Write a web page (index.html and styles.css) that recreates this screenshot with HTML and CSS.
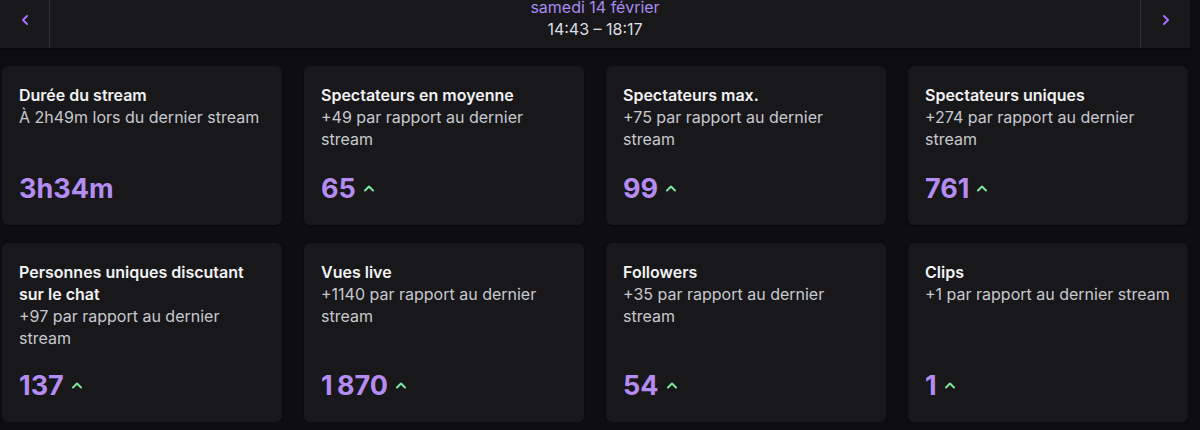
FILE: index.html
```html
<!DOCTYPE html>
<html lang="fr">
<head>
    <meta charset="UTF-8">
    <title>Statistiques du stream</title>
    <link rel="stylesheet" href="styles.css">
</head>
<body>
    <div class="page">
        <!-- Date navigation -->
        <header class="stream-nav">
            <button class="nav-btn nav-prev" aria-label="Stream précédent">
                <svg width="10" height="12" viewBox="0 0 10 12"><path d="M7 2 L3 6 L7 10" fill="none" stroke="currentColor" stroke-width="2" stroke-linecap="round" stroke-linejoin="round"/></svg>
            </button>
            <div class="stream-date">
                <div class="date">samedi 14 février</div>
                <div class="time">14:43 – 18:17</div>
            </div>
            <button class="nav-btn nav-next" aria-label="Stream suivant">
                <svg width="10" height="12" viewBox="0 0 10 12"><path d="M3 2 L7 6 L3 10" fill="none" stroke="currentColor" stroke-width="2" stroke-linecap="round" stroke-linejoin="round"/></svg>
            </button>
        </header>

        <!-- Stats -->
        <main class="stats-grid">
            <div class="stat-card">
                <div class="stat-title">Durée du stream</div>
                <div class="stat-sub">À 2h49m lors du dernier stream</div>
                <div class="stat-value">3h34m</div>
            </div>
            <div class="stat-card">
                <div class="stat-title">Spectateurs en moyenne</div>
                <div class="stat-sub">+49 par rapport au dernier stream</div>
                <div class="stat-value">65 <span class="trend-up"><svg width="12" height="8" viewBox="0 0 12 8"><path d="M2 6.5 L6 2.5 L10 6.5" fill="none" stroke="currentColor" stroke-width="2" stroke-linecap="round" stroke-linejoin="round"/></svg></span></div>
            </div>
            <div class="stat-card">
                <div class="stat-title">Spectateurs max.</div>
                <div class="stat-sub">+75 par rapport au dernier stream</div>
                <div class="stat-value">99 <span class="trend-up"><svg width="12" height="8" viewBox="0 0 12 8"><path d="M2 6.5 L6 2.5 L10 6.5" fill="none" stroke="currentColor" stroke-width="2" stroke-linecap="round" stroke-linejoin="round"/></svg></span></div>
            </div>
            <div class="stat-card">
                <div class="stat-title">Spectateurs uniques</div>
                <div class="stat-sub">+274 par rapport au dernier stream</div>
                <div class="stat-value">761 <span class="trend-up"><svg width="12" height="8" viewBox="0 0 12 8"><path d="M2 6.5 L6 2.5 L10 6.5" fill="none" stroke="currentColor" stroke-width="2" stroke-linecap="round" stroke-linejoin="round"/></svg></span></div>
            </div>
            <div class="stat-card">
                <div class="stat-title">Personnes uniques discutant sur le chat</div>
                <div class="stat-sub">+97 par rapport au dernier stream</div>
                <div class="stat-value">137 <span class="trend-up"><svg width="12" height="8" viewBox="0 0 12 8"><path d="M2 6.5 L6 2.5 L10 6.5" fill="none" stroke="currentColor" stroke-width="2" stroke-linecap="round" stroke-linejoin="round"/></svg></span></div>
            </div>
            <div class="stat-card">
                <div class="stat-title">Vues live</div>
                <div class="stat-sub">+1140 par rapport au dernier stream</div>
                <div class="stat-value">1&#8239;870 <span class="trend-up"><svg width="12" height="8" viewBox="0 0 12 8"><path d="M2 6.5 L6 2.5 L10 6.5" fill="none" stroke="currentColor" stroke-width="2" stroke-linecap="round" stroke-linejoin="round"/></svg></span></div>
            </div>
            <div class="stat-card">
                <div class="stat-title">Followers</div>
                <div class="stat-sub">+35 par rapport au dernier stream</div>
                <div class="stat-value">54 <span class="trend-up"><svg width="12" height="8" viewBox="0 0 12 8"><path d="M2 6.5 L6 2.5 L10 6.5" fill="none" stroke="currentColor" stroke-width="2" stroke-linecap="round" stroke-linejoin="round"/></svg></span></div>
            </div>
            <div class="stat-card">
                <div class="stat-title">Clips</div>
                <div class="stat-sub">+1 par rapport au dernier stream</div>
                <div class="stat-value">1 <span class="trend-up"><svg width="12" height="8" viewBox="0 0 12 8"><path d="M2 6.5 L6 2.5 L10 6.5" fill="none" stroke="currentColor" stroke-width="2" stroke-linecap="round" stroke-linejoin="round"/></svg></span></div>
            </div>
        </main>
    </div>
</body>
</html>
```

FILE: styles.css
```css
/* General */
body {
    margin: 0;
    background: #0e0e10;
    color: #efeff1;
    font-family: 'Inter', 'Noto Sans', sans-serif;
    overflow: hidden;
}

.page {
    width: 1190px;
    margin-top: -8px;
}

/* Date navigation */
.stream-nav {
    height: 56px;
    display: flex;
    background: #18181b;
    box-shadow: 0 1px 2px rgba(0, 0, 0, 0.6);
}

.nav-btn {
    width: 50px;
    border: none;
    background: transparent;
    color: #a970ff;
    display: flex;
    align-items: center;
    justify-content: center;
    padding: 0;
    cursor: pointer;
}

.nav-prev {
    border-right: 1px solid #2f2f35;
}

.nav-next {
    border-left: 1px solid #2f2f35;
}

.stream-date {
    flex: 1;
    display: flex;
    flex-direction: column;
    align-items: center;
    justify-content: center;
    padding-bottom: 4px;
    font-size: 16px;
    line-height: 22px;
}

.stream-date .date {
    color: #a98af0;
}

.stream-date .time {
    color: #dedee3;
}

/* Stats */
.stats-grid {
    display: grid;
    grid-template-columns: repeat(4, 1fr);
    column-gap: 22px;
    row-gap: 18px;
    margin: 18px 2px 0;
}

.stat-card {
    min-height: 159px;
    box-sizing: border-box;
    background: #18181b;
    border-radius: 6px;
    padding: 18px 17px;
    display: flex;
    flex-direction: column;
    box-shadow: 0 1px 3px rgba(0, 0, 0, 0.5);
}

.stat-title {
    font-size: 16px;
    font-weight: 600;
    line-height: 22px;
    color: #f2f2f4;
}

.stat-sub {
    font-size: 16px;
    line-height: 22px;
    color: #c8c8cf;
}

.stat-value {
    margin-top: auto;
    padding-top: 19px;
    font-size: 27px;
    font-weight: 700;
    line-height: 36px;
    color: #b48cf2;
    display: flex;
    align-items: center;
    gap: 7px;
}

.trend-up {
    color: #7ee69a;
    display: flex;
    margin-top: -3px;
}
```
